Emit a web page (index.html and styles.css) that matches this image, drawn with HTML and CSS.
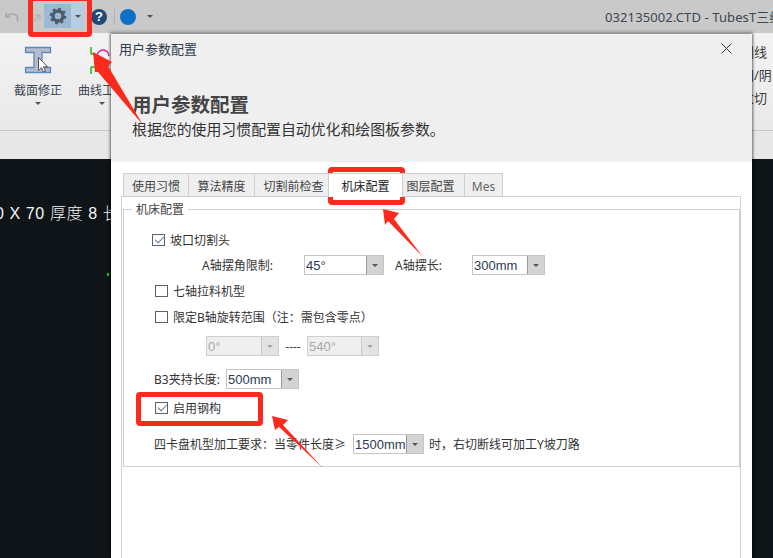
FILE: index.html
```html
<!DOCTYPE html>
<html lang="zh-CN">
<head>
<meta charset="utf-8">
<title>用户参数配置</title>
<link rel="stylesheet" href="styles.css">
</head>
<body>
<div class="app">
  <header class="titlebar">
    <svg class="ico undo" width="14" height="12" viewBox="0 0 14 12"><path d="M1 2v4h4M1.500 6C4 2.500 9 2 11.500 4.500c1.500 1.500 1.500 4 .5 6" fill="none" stroke="#a8a8a8" stroke-width="1.600"/></svg>
    <svg class="ico redo" width="10" height="12" viewBox="0 0 10 12"><path d="M8 9V4H3M8 4L2 10" fill="none" stroke="#b2b2b2" stroke-width="1.400"/></svg>
    <div class="qa-active">
      <span class="qa-main">
        <svg width="18" height="18" viewBox="0 0 18 18"><circle cx="9" cy="9" r="5" fill="none" stroke="#4f5b66" stroke-width="3.400"/><circle cx="9" cy="9" r="7.200" fill="none" stroke="#4f5b66" stroke-width="2.200" stroke-dasharray="2.800 2.850"/></svg>
      </span>
      <span class="qa-drop"><i class="caret"></i></span>
    </div>
    <span class="help">?</span>
    <span class="qa-sep"></span>
    <span class="dot"></span>
    <i class="caret caret-far"></i>
    <span class="doc-title">032135002.CTD - TubesT三维</span>
  </header>

  <section class="ribbon">
    <div class="rb-tool rb-first">
      <svg width="28" height="28" viewBox="0 0 28 28"><path d="M1.500 1.500h25v5h-8.500v15h8.500v5h-25v-5h8.500v-15h-8.500z" fill="#b6bcc5" stroke="#5b88c8" stroke-width="1.300"/><path d="M14.500 11.500v13l3-2.800 2 4.300 2-1-2-4.200h4z" fill="#fff" stroke="#444" stroke-width=".9"/></svg>
      <span class="rb-label">截面修正</span>
      <i class="caret"></i>
    </div>
    <div class="rb-tool rb-second">
      <svg width="28" height="28" viewBox="0 0 28 28"><path d="M3 1v7M3 8h3M3 21h7M3 21v7" fill="none" stroke="#18b818" stroke-width="1.500"/><path d="M9 10a6 6 0 0 1 12 0" fill="none" stroke="#e8209a" stroke-width="1.500"/><path d="M15 14l6 6" stroke="#555" stroke-width="1.500"/></svg>
      <span class="rb-label">曲线工具</span>
      <i class="caret"></i>
    </div>
    <div class="rb-right">
      <span>割线</span>
      <span>阳/阴</span>
      <span>过切</span>
    </div>
  </section>
  <div class="ribbon-foot"></div>
  <main class="canvas">
    <p class="canvas-text">0 X 70 厚度 8 长</p>
    <i class="canvas-mark"></i>
  </main>
</div>

<div class="dialog">
  <div class="dlg-head">
    <div class="dlg-bar">
      <span class="dlg-title">用户参数配置</span>
      <svg width="11" height="11" viewBox="0 0 11 11"><path d="M.5.500l10 10M10.500.500l-10 10" stroke="#333" stroke-width="1"/></svg>
    </div>
    <h1 class="dlg-h1">用户参数配置</h1>
    <p class="dlg-sub">根据您的使用习惯配置自动优化和绘图板参数。</p>
  </div>
  <div class="dlg-body">
    <nav class="tabs">
      <span class="tab t1">使用习惯</span>
      <span class="tab t2">算法精度</span>
      <span class="tab t3">切割前检查</span>
      <span class="tab t4 on">机床配置</span>
      <span class="tab t5">图层配置</span>
      <span class="tab t6">Mes</span>
    </nav>
    <div class="panel">
      <div class="group">
        <span class="legend">机床配置</span>

        <div class="row r1"><span class="chk big on"></span><span class="gap5">坡口切割头</span></div>
        <div class="row r2">
          <span class="lbl w102">A轴摆角限制:</span>
          <span class="combo w80"><span class="val">45°</span><span class="btn"></span></span>
          <span class="lbl w77">A轴摆长:</span>
          <span class="combo w73"><span class="val">300mm</span><span class="btn"></span></span>
        </div>
        <div class="row r3"><span class="chk"></span><span class="gap5">七轴拉料机型</span></div>
        <div class="row r4"><span class="chk"></span><span class="gap5">限定B轴旋转范围（注：需包含零点）</span></div>
        <div class="row r5">
          <span class="combo w73 off"><span class="val">0°</span><span class="btn"></span></span>
          <span class="dash">----</span>
          <span class="combo w72 off"><span class="val">540°</span><span class="btn"></span></span>
        </div>
        <div class="row r6">
          <span class="lbl w72">B3夹持长度:</span>
          <span class="combo w73"><span class="val">500mm</span><span class="btn"></span></span>
        </div>
        <div class="row r7"><span class="chk on"></span><span class="gap5">启用钢构</span></div>
        <div class="row r8">
          <span class="lbl w199">四卡盘机型加工要求：当零件长度≥</span>
          <span class="combo w71"><span class="val">1500mm</span><span class="btn"></span></span>
          <span class="gap5">时，右切断线可加工Y坡刀路</span>
        </div>
      </div>
    </div>
  </div>
</div>

<div class="mark m1"></div>
<div class="mark m2"></div>
<div class="mark m3"></div>
<svg class="arrows" width="773" height="558" viewBox="0 0 773 558">
  <polygon points="93,52 112,62 108,66 143,125 98,72 95,72" fill="#fb2a1c"/>
  <polygon points="383,209 399,213 394,219 423,257 388,221 385,225" fill="#fb2a1c"/>
  <polygon points="272,416 288,420 283,425 323,468 279,427 275,430" fill="#fb2a1c"/>
</svg>
</body>
</html>
```

FILE: styles.css
```css
* { box-sizing: border-box; }
html, body { margin: 0; padding: 0; }
body {
  position: relative;
  width: 773px;
  height: 558px;
  overflow: hidden;
  font-family: "Noto Sans", "Noto Sans CJK SC", sans-serif;
  font-size: 12px;
  color: #3a3a3a;
}
.app { display: flex; flex-direction: column; height: 558px; }

/* title bar */
.titlebar {
  height: 33px;
  flex: none;
  display: flex;
  align-items: center;
  background: #c9c9c9;
  padding-left: 5px;
  overflow: hidden;
  white-space: nowrap;
}
.titlebar > * { flex: none; }
.redo { margin-left: 13px; margin-top: 1px; }
.qa-active { display: flex; height: 24px; margin-left: 2px; margin-top: -1px; }
.qa-main { width: 27px; background: #9ab9d8; display: flex; align-items: center; justify-content: center; }
.qa-drop { width: 11px; margin-left: 1px; background: #b5cde6; display: flex; align-items: center; justify-content: center; }
.caret { display: block; width: 0; height: 0; border-left: 3px solid transparent; border-right: 3px solid transparent; border-top: 3px solid #555; }
.help {
  width: 16px; height: 16px; border-radius: 50%;
  background: #1f4a78; color: #fff;
  margin-left: 8px;
  font: bold 13px/16px "Liberation Sans", sans-serif;
  text-align: center;
}
.qa-sep { width: 1px; height: 16px; background: #b2b2b2; margin-left: 7px; }
.dot { width: 16px; height: 16px; border-radius: 50%; background: #0e70c4; margin-left: 5px; }
.caret-far { margin-left: 11px; }
.doc-title { margin-left: 452px; font-size: 13px; letter-spacing: .1px; color: #3c4650; }

/* ribbon */
.ribbon {
  height: 98px;
  flex: none;
  display: flex;
  align-items: flex-start;
  background: linear-gradient(#f3f3f3, #e9e9e9);
  border-bottom: 1px solid #c8c8c8;
  overflow: hidden;
  position: relative;
}
.rb-tool { display: flex; flex-direction: column; align-items: center; width: 52px; padding-top: 13px; }
.rb-first { margin-left: 12px; }
.rb-second { margin-left: 12px; }
.rb-label { margin-top: 9px; font-size: 12px; line-height: 16px; white-space: nowrap; color: #3c4650; }
.rb-tool .caret { margin-top: 3px; }
.rb-right {
  margin-left: 613px;
  padding-top: 11px;
  display: flex;
  flex-direction: column;
  gap: 7px;
  font-size: 13px;
  line-height: 16px;
  white-space: nowrap;
}
.ribbon-foot { height: 28px; flex: none; background: #e7e7e7; }
.canvas { flex: 1; background: #0e1418; position: relative; }
.canvas-text {
  margin: 46px 0 0 -5px;
  color: #f4f4f4;
  font-family: "Liberation Sans", "Noto Sans CJK SC", sans-serif;
  font-size: 16px;
  font-weight: 300;
  letter-spacing: .6px;
  line-height: 18px;
  white-space: nowrap;
}
.canvas-mark { position: absolute; left: 107px; top: 114px; width: 2px; height: 3px; background: #16d016; }

/* dialog */
.dialog {
  position: absolute;
  left: 111px;
  top: 34px;
  width: 641px;
  height: 524px;
  background: #fff;
  box-shadow: 0 -1px 3px 1px rgba(0,0,0,.3), 1px 0 2px rgba(0,0,0,.3), -1px 0 2px rgba(0,0,0,.3);
  display: flex;
  flex-direction: column;
}
.dlg-head { height: 128px; flex: none; background: #efefef; padding-left: 8px; }
.dlg-bar { display: flex; justify-content: space-between; align-items: center; height: 29px; padding-right: 20px; }
.dlg-title { font-size: 13px; color: #2e3d4d; }
.dlg-h1 {
  margin: 29px 0 0 13px;
  font-family: "Noto Sans CJK SC", sans-serif;
  font-size: 19.500px;
  line-height: 24px;
  font-weight: 700;
  color: #444;
}
.dlg-sub { margin: 3px 0 0 13px; font-size: 14.900px; line-height: 20px; color: #333; }
.dlg-body { flex: 1; padding: 11px 11px 0 10px; display: flex; flex-direction: column; }

/* tabs */
.tabs { display: flex; height: 24px; padding-left: 2px; flex: none; position: relative; z-index: 1; }
.tab {
  height: 24px;
  border: 1px solid #cfcfcf;
  border-left-width: 0;
  background: #efefef;
  text-align: center;
  line-height: 25px;
  white-space: nowrap;
  color: #454545;
}
.t1 { width: 66px; border-left-width: 1px; }
.t2 { width: 66px; }
.t3 { width: 74px; padding-left: 4px; }
.t4 { width: 74px; }
.t5 { width: 62px; padding-right: 6px; }
.t6 { width: 38px; color: #666; }
.tab.on { background: #fff; border-bottom-color: #fff; color: #222; }

.panel { flex: 1; border: 1px solid #cfcfcf; border-bottom: 0; padding: 12px 0 0 1px; margin-top: -1px; }
.group {
  position: relative;
  height: 258px;
  border: 1px solid #cfcfcf;
  padding-top: 20px;
  color: #333;
}
.legend { position: absolute; left: 8px; top: -8px; padding: 0 4px; background: #fff; line-height: 16px; color: #444; }

/* rows */
.row { display: flex; align-items: center; height: 20px; white-space: nowrap; }
.r1 { padding-left: 28px; }
.r2 { padding-left: 78px; margin-top: 5px; }
.r3 { padding-left: 31px; margin-top: 6px; }
.r4 { padding-left: 31px; margin-top: 6px; }
.r5 { padding-left: 82px; margin-top: 9px; }
.r6 { padding-left: 30px; margin-top: 13px; }
.r7 { padding-left: 31px; margin-top: 9px; }
.r8 { padding-left: 30px; margin-top: 16px; }

.gap5 { margin-left: 5px; }
.lbl { display: block; }
.w102 { width: 102px; }
.w77 { width: 77px; margin-left: 11px; }
.lbl.w72 { width: 72px; }
.w199 { width: 199px; }

.chk { position: relative; display: block; width: 13px; height: 12px; border: 1px solid #55616d; background: #fff; flex: none; }
.chk.on::after {
  content: "";
  position: absolute;
  left: 2px;
  top: 0;
  width: 8px;
  height: 4px;
  margin-top: 1px;
  border-left: 1.500px solid #6a7580;
  border-bottom: 1.500px solid #6a7580;
  transform: rotate(-45deg);
}
.combo { display: flex; height: 20px; border: 1px solid #c4c4c4; background: #fff; flex: none; }
.w80 { width: 80px; }
.w73 { width: 73px; }
.combo.w72 { width: 72px; }
.w71 { width: 71px; }
.val { flex: 1; padding-left: 1px; font-family: "Liberation Sans", sans-serif; font-size: 13px; line-height: 19px; color: #2b3a55; }
.btn { width: 17px; background: #d3d3d3; border-left: 1px solid #9a9a9a; position: relative; }
.btn::after {
  content: "";
  position: absolute;
  left: 5px;
  top: 8px;
  border-left: 3px solid transparent;
  border-right: 3px solid transparent;
  border-top: 3px solid #555;
}
.combo.off { background: #efefef; border-color: #cfcfcf; }
.combo.off .val { color: #a8a8a8; }
.combo.off .btn { background: #e3e3e3; border-left-color: #c8c8c8; }
.combo.off .btn::after { border-top-color: #a5a5a5; }
.dash { width: 28px; text-align: center; color: #444; }

/* annotations */
.mark { position: absolute; border: 5px solid #fb2a1c; border-radius: 4px; }
.m1 { left: 28px; top: -4px; width: 64px; height: 41px; }
.m2 { left: 328px; top: 167px; width: 77px; height: 38px; }
.m3 { left: 136px; top: 392px; width: 127px; height: 34px; }
.arrows { position: absolute; left: 0; top: 0; pointer-events: none; }
```
